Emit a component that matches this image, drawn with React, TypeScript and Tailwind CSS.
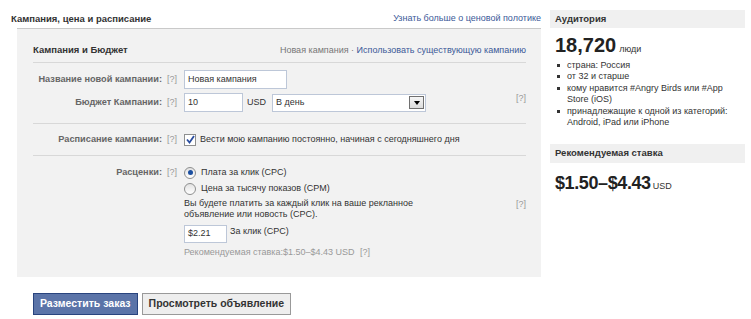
import React from 'react'

function Help({ className = '' }: { className?: string }) {
  return <span className={`text-[#999] text-[9px] ${className}`}>[?]</span>
}

function Row({ label, children, className = '' }: { label: string; children: React.ReactNode; className?: string }) {
  return (
    <div className={`flex items-start ${className}`}>
      <div className="w-[144px] shrink-0 flex justify-end items-center h-[19px] gap-[5px] whitespace-nowrap">
        <span className="font-bold text-[#666] text-[9.2px]">{label}</span>
        <Help />
      </div>
      <div className="ml-[7px] flex-1">{children}</div>
    </div>
  )
}

function Radio({ checked }: { checked?: boolean }) {
  return (
    <span className="w-[12px] h-[12px] rounded-full border border-[#8e8f8f] bg-gradient-to-b from-[#e2e2e2] to-white flex items-center justify-center shrink-0">
      {checked && <span className="w-[5px] h-[5px] rounded-full bg-[#1b4fa0]" />}
    </span>
  )
}

export default function App() {
  return (
    <div className="w-[751px] h-[319px] bg-white flex font-['Liberation_Sans',Arial,sans-serif] text-[9px] text-[#333] overflow-hidden">
      <div className="w-[541px] shrink-0 pl-[11px] pt-[10px]">
        <div className="flex justify-between items-center h-[18px]">
          <span className="font-bold text-[9.5px]">Кампания, цена и расписание</span>
          <span className="text-[#3b5998]">Узнать больше о ценовой полотике</span>
        </div>
        <div className="ml-[6px] bg-[#f2f2f2] border-t border-[#c9c9c9] pl-[16px] pr-[15px] pt-[14px] h-[249px]">
          <div className="flex justify-between items-center border-b border-[#d8d8d8] pb-[4px] h-[15px] box-content">
            <span className="font-bold text-[9.5px]">Кампания и Бюджет</span>
            <span>
              <span className="text-[#777]">Новая кампания</span>
              <span className="text-[#777]"> · </span>
              <span className="text-[#3b5998]">Использовать существующую кампанию</span>
            </span>
          </div>

          <div className="border-b border-[#d8d8d8] pt-[7px] pb-[11px]">
            <Row label="Название новой кампании:">
              <div className="w-[103px] h-[19px] border border-[#bdc7d8] bg-white px-[3px] flex items-center">Новая кампания</div>
            </Row>
            <Row label="Бюджет Кампании:" className="mt-[4px]">
              <div className="flex items-center">
                <div className="w-[59px] h-[19px] border border-[#bdc7d8] bg-white px-[3px] flex items-center">10</div>
                <span className="ml-[4px]">USD</span>
                <div className="ml-[6px] w-[154px] h-[18px] border border-[#bdc7d8] bg-white pl-[3px] flex items-center justify-between">
                  <span>В день</span>
                  <span className="w-[15px] h-[13px] mr-[1px] border border-[#707070] bg-gradient-to-b from-[#f6f6f6] to-[#dcdcdc] flex items-center justify-center">
                    <span className="w-0 h-0 border-l-[3px] border-r-[3px] border-t-[4px] border-l-transparent border-r-transparent border-t-black" />
                  </span>
                </div>
                <Help className="ml-auto -mt-[8px]" />
              </div>
            </Row>
          </div>

          <div className="border-b border-[#d8d8d8] pt-[6px] pb-[6px]">
            <Row label="Расписание кампании:">
              <div className="flex items-center h-[19px] gap-[4px]">
                <span className="w-[12px] h-[12px] border border-[#8e8f8f] bg-white flex items-center justify-center">
                  <svg width="9" height="9" viewBox="0 0 9 9">
                    <path d="M1 4.5 L3.5 7.5 L8 1" fill="none" stroke="#2a4d9f" strokeWidth="1.8" />
                  </svg>
                </span>
                <span>Вести мою кампанию постоянно, начиная с сегодняшнего дня</span>
              </div>
            </Row>
          </div>

          <div className="pt-[7px]">
            <Row label="Расценки:">
              <div className="flex items-center h-[19px] gap-[5px]">
                <Radio checked />
                <span>Плата за клик (CPC)</span>
              </div>
              <div className="flex items-center h-[14px] gap-[5px]">
                <Radio />
                <span>Цена за тысячу показов (CPM)</span>
              </div>
              <div className="flex justify-between mt-[2px]">
                <p className="leading-[11px] w-[240px]">Вы будете платить за каждый клик на ваше рекланное объявление или новость (CPC).</p>
                <Help />
              </div>
              <div className="flex items-center mt-[5px]">
                <div className="w-[43px] h-[18px] border border-[#bdc7d8] bg-white px-[3px] flex items-center">$2.21</div>
                <span className="ml-[3px] -mt-[4px]">За клик (CPC)</span>
              </div>
              <div className="mt-[3px] text-[#999]">
                Рекомендуемая ставка:$1.50–$4.43 USD <span className="ml-[3px]">[?]</span>
              </div>
            </Row>
          </div>
        </div>
        <div className="flex gap-[4px] ml-[22px] mt-[16px]">
          <button className="h-[22px] px-[6px] bg-[#5b74a8] border border-[#29447e] text-white font-bold text-[10.5px]">Разместить заказ</button>
          <button className="h-[22px] px-[6px] bg-[#eeeeee] border border-[#999] text-[#333] font-bold text-[10.5px]">Просмотреть объявление</button>
        </div>
      </div>

      <div className="ml-[9px] w-[195px] pt-[10px]">
        <div className="bg-[#f0f0f0] h-[18px] flex items-center px-[5px] font-bold text-[9.5px]">Аудитория</div>
        <div className="px-[5px] pt-[6px]">
          <div className="flex items-baseline gap-[3px]">
            <span className="text-[20px] font-bold text-[#222] leading-[22px]">18,720</span>
            <span className="text-[9px]">люди</span>
          </div>
          <ul className="mt-[3px] text-[9px] leading-[11.5px]">
            {['страна: Россия', 'от 32 и старше', 'кому нравится #Angry Birds или #App Store (iOS)', 'принадлежащие к одной из категорий: Android, iPad или iPhone'].map((t) => (
              <li key={t} className="flex">
                <span className="w-[3px] h-[3px] bg-[#333] mt-[4px] ml-[2px] mr-[7px] shrink-0" />
                <span>{t}</span>
              </li>
            ))}
          </ul>
        </div>
        <div className="bg-[#f0f0f0] h-[19px] flex items-center px-[5px] font-bold text-[9.5px] mt-[15px]">Рекомендуемая ставка</div>
        <div className="px-[5px] pt-[9px] flex items-baseline gap-[2px]">
          <span className="text-[18px] font-bold text-[#222] leading-[22px] tracking-[-0.4px]">$1.50–$4.43</span>
          <span className="text-[9px]">USD</span>
        </div>
      </div>
    </div>
  )
}
